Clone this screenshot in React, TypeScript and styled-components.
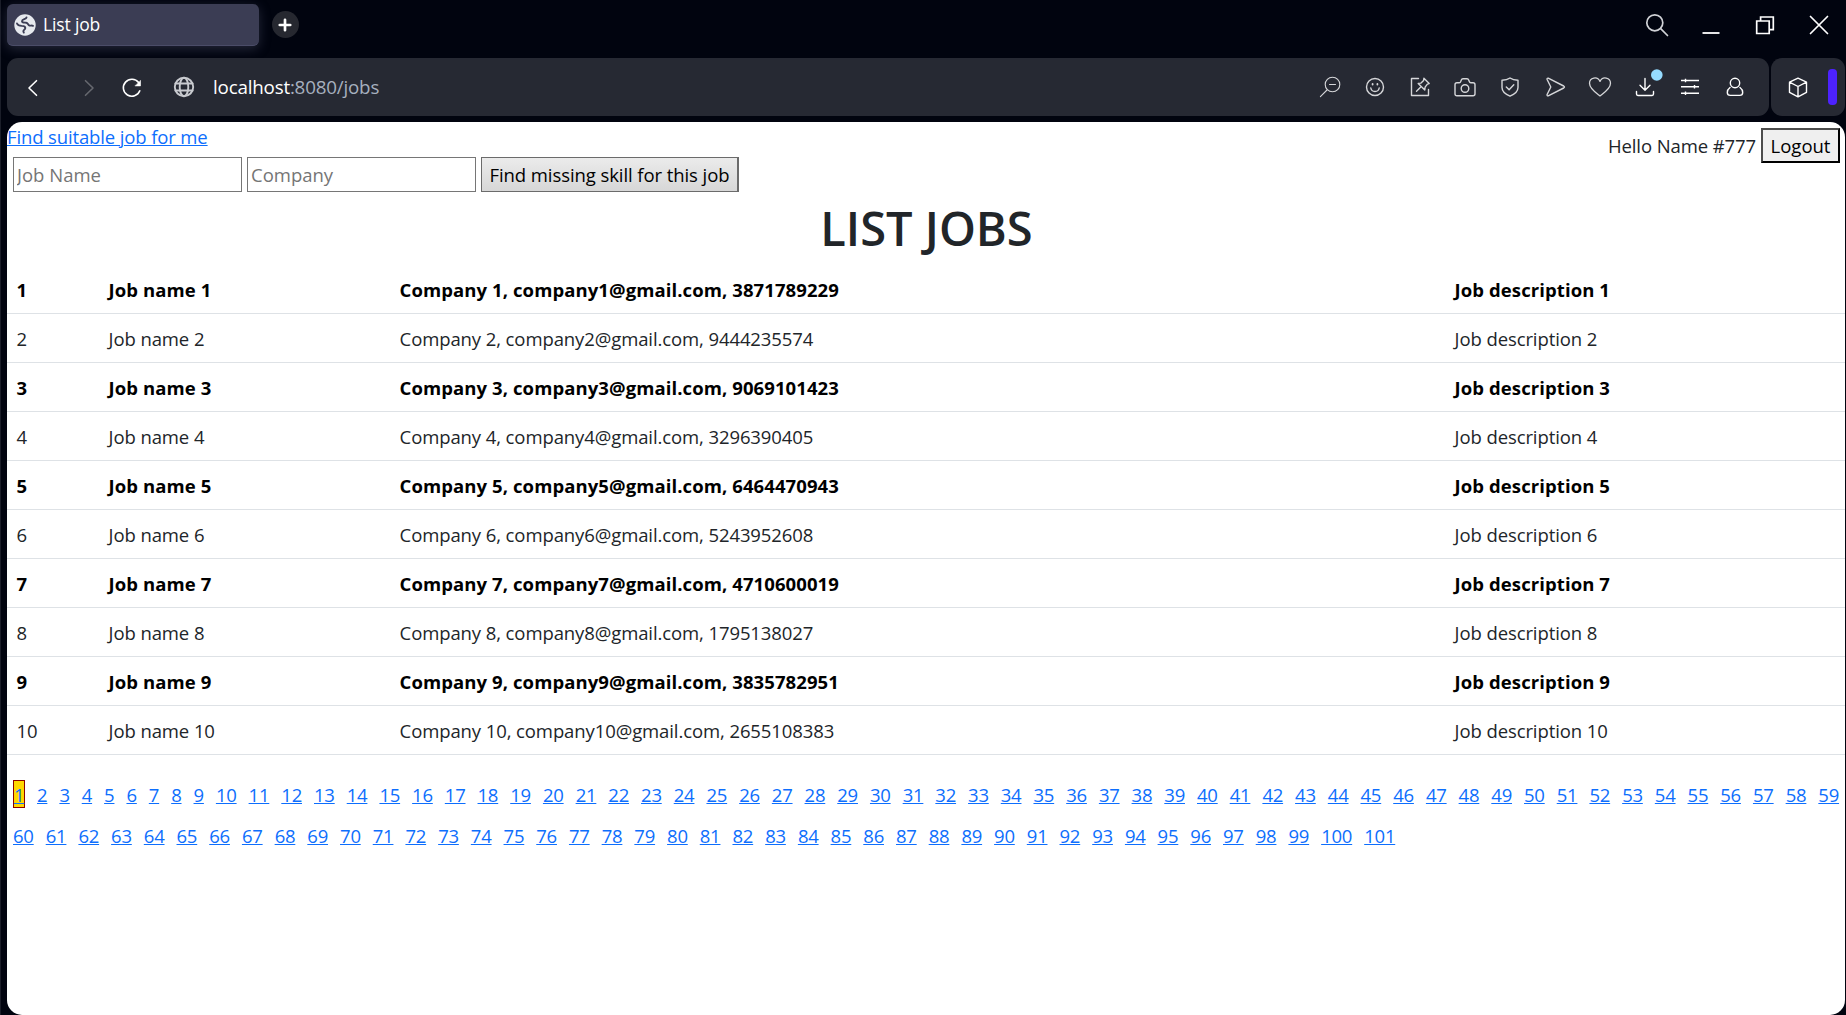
import React from "react";
import styled, { createGlobalStyle } from "styled-components";

const GlobalStyle = createGlobalStyle`
  *, *::before, *::after { box-sizing: border-box; }
  html, body { margin: 0; padding: 0; background: #01040f; overflow: hidden; }
  body, input, button {
    font-family: "Open Sans", "Noto Sans", sans-serif;
    font-size: 18.5px;
    font-weight: 400;
    line-height: 28.8px;
  }
`;

const Window = styled.div`
  width: 100vw;
  height: 100vh;
  display: flex;
  flex-direction: column;
  background: #01040f;
  border-left: 1px solid #1b1e29;
  padding: 0 1px 0 6px;
`;

const TabStrip = styled.header`
  height: 58px;
  display: flex;
  align-items: flex-start;
  padding-top: 4px;
`;

const Tab = styled.div`
  width: 252px;
  height: 42px;
  display: flex;
  align-items: center;
  gap: 7px;
  padding-left: 7px;
  border-radius: 6px;
  background: #3b3d54;
  border-bottom: 1px solid #4b4d68;
  box-shadow: 0 3px 12px rgba(90, 92, 120, 0.4);
`;

const TabTitle = styled.span`
  color: #fff;
  font-size: 17.5px;
  letter-spacing: -0.15px;
`;

const NewTab = styled.button`
  width: 27px;
  height: 27px;
  margin: 7px 0 0 12.5px;
  padding: 0;
  border: 0;
  border-radius: 50%;
  background: #262830;
  display: flex;
  align-items: center;
  justify-content: center;
`;

const WindowControls = styled.div`
  margin-left: auto;
  padding: 9px 14px 0 0;
  display: flex;
  gap: 30px;
`;

const Bars = styled.div`
  height: 58px;
  flex: none;
  display: flex;
  gap: 2px;
`;

const Bar = styled.div<{ $grow?: boolean }>`
  flex: ${(p) => (p.$grow ? "1" : "0 0 74px")};
  display: flex;
  align-items: center;
  background: #262933;
  border-radius: 11px;
  padding: ${(p) => (p.$grow ? "0 22px 0 14px" : "0 8px 0 15px")};
  justify-content: ${(p) => (p.$grow ? "flex-start" : "space-between")};
`;

const NavIcons = styled.div`
  display: flex;
  gap: 25px;
`;

const Address = styled.div`
  display: flex;
  align-items: center;
  gap: 17px;
  margin-left: 29px;
`;

const Url = styled.div`
  color: #a6b0bf;
  font-size: 18.8px;
  letter-spacing: -0.2px;
`;

const Host = styled.span`
  color: #fff;
`;

const Tools = styled.div`
  margin-left: auto;
  display: flex;
  gap: 21px;
`;

const Purple = styled.span`
  width: 9px;
  height: 36px;
  border-radius: 4px;
  background: #4d22ff;
`;

const Page = styled.main`
  position: relative;
  margin-top: 6px;
  flex: 1;
  background: #fff;
  color: #212529;
  border-radius: 15px;
  overflow: hidden;
`;

const Link = styled.a`
  color: #0d6efd;
  text-decoration: underline;
  text-decoration-thickness: 1px;
  text-underline-offset: 1px;
`;

const TopLink = styled(Link)`
  display: block;
  width: max-content;
  padding-top: 1px;
  letter-spacing: -0.13px;
`;

const Account = styled.div`
  position: absolute;
  top: 6px;
  right: 5px;
  display: flex;
  align-items: center;
  gap: 5px;
`;

const Greeting = styled.span`
  padding-top: 2px;
  letter-spacing: -0.1px;
`;

const Logout = styled.button`
  width: 79px;
  height: 35px;
  padding: 0;
  background: #efefef;
  border: 2px outset #000;
  border-color: #4c4c4c #000 #000 #4c4c4c;
  color: #000;
  line-height: 28px;
`;

const SearchForm = styled.form`
  display: flex;
  gap: 5px;
  padding: 5px 6px 0;
`;

const Field = styled.input`
  width: 229px;
  height: 35px;
  border: 1px solid #767676;
  border-radius: 0;
  padding: 1px 3px;
  &::placeholder { color: #757575; }
`;

const Submit = styled.button`
  width: 258px;
  height: 35px;
  padding: 2px 0 0;
  border: 1px solid #6b6b6b;
  border-right-width: 2px;
  background: linear-gradient(#ebebeb, #d7d7d7);
  color: #000;
  white-space: nowrap;
  letter-spacing: -0.08px;
`;

const Title = styled.h1`
  margin: 7px 0 8px;
  padding-left: 1px;
  height: 58px;
  line-height: 58px;
  font-size: 47px;
  font-weight: 600;
  text-align: center;
  letter-spacing: 0;
`;

const Table = styled.table`
  width: 100%;
  table-layout: fixed;
  border-collapse: collapse;
`;

const Row = styled.tr<{ $strong: boolean }>`
  height: 49px;
  color: ${(p) => (p.$strong ? "#000" : "#212529")};
  font-weight: ${(p) => (p.$strong ? 700 : 400)};
  letter-spacing: ${(p) => (p.$strong ? "0.09px" : "-0.1px")};
`;

const Cell = styled.td`
  padding: 11px 9.6px 8px;
  border-bottom: 1px solid #dee2e6;
  white-space: nowrap;
`;

const Pages = styled.nav`
  display: flex;
  flex-wrap: wrap;
  column-gap: 12.02px;
  row-gap: 13px;
  padding: 25px 0 0 6px;
`;

const PageLink = styled(Link)<{ $digits: number; $active: boolean }>`
  width: ${(p) => (p.$active ? 12 : p.$digits * 10.35)}px;
  height: 28px;
  line-height: ${(p) => (p.$active ? 28 : 30)}px;
  letter-spacing: -0.23px;
  text-align: center;
  ${(p) => p.$active && "background: gold; border: 1px solid #8b0000;"}
`;

type IconProps = { children: React.ReactNode; color?: string; size?: number; weight?: number };
const Icon = ({ children, color = "#d5d6d9", size = 24, weight = 1.25 }: IconProps) => (
  <svg width={size} height={size} viewBox="0 0 24 24" fill="none" stroke={color}
    strokeWidth={weight} strokeLinecap="round" strokeLinejoin="round" overflow="visible">
    {children}
  </svg>
);

const phones = [
  "3871789229", "9444235574", "9069101423", "3296390405", "6464470943",
  "5243952608", "4710600019", "1795138027", "3835782951", "2655108383",
];
const pageNumbers = Array.from({ length: 101 }, (_, i) => i + 1);

export default function App() {
  return (
    <>
      <GlobalStyle />
      <Window>
        <TabStrip>
          <Tab>
            <svg width="22" height="22" viewBox="0 0 22 22">
              <circle cx="11" cy="11" r="10.7" fill="#e6e9ee" />
              <g fill="none" stroke="#3b3d54" strokeWidth="1.9" strokeLinecap="round" strokeLinejoin="round">
                <path d="M3 9.500c.8 2 2.600 2.300 4.700 2.400 2.500 0 3.600.8 3.600 2.100 0 1.200-1.300 1.600-1.800 2.600-.3.700 0 1.500.3 2" />
                <path d="M12.500 3.500c-.3 1.900-4.500 1.500-4.500 3.700 0 1.700 2.300 1.300 4.200 1.500 1.700.2 1.600 2.200 3.200 2.800 1.200.4 2.300-.3 3.600.3" />
              </g>
            </svg>
            <TabTitle>List job</TabTitle>
          </Tab>
          <NewTab aria-label="New tab">
            <Icon size={14} color="#fff" weight={4.6}><path d="M12 3v18M3 12h18" /></Icon>
          </NewTab>
          <WindowControls>
            <Icon color="#d0d2d6" weight={1.7}><circle cx="9.8" cy="9.8" r="8" /><path d="m15.700 15.700 6.800 6.800" /></Icon>
            <Icon color="#fff" weight={1.8}><path d="M3.500 20h17" strokeLinecap="butt" /></Icon>
            <Icon color="#fff" weight={1.7}><path d="M3.700 8h12.500v12.500H3.700zM7.600 8V4h12.700v12.600h-4" strokeLinejoin="miter" /></Icon>
            <Icon color="#fff" weight={1.7}><path d="m3.500 3.500 17 17m0-17-17 17" /></Icon>
          </WindowControls>
        </TabStrip>

        <Bars>
          <Bar $grow>
            <NavIcons>
              <Icon color="#fff" weight={1.6}><path d="m15.500 5.700-7.500 7.300 7.500 7.300" /></Icon>
              <Icon color="#66686f" weight={1.6}><path d="m15.500 5.700 7.500 7.300-7.500 7.300" /></Icon>
              <Icon color="#fff" weight={1.6}><path d="M20.800 15.800a8.500 8.500 0 1 1-1.200-8.200" /><path d="M21.500 5.700v5.200h-5.200z" fill="#fff" strokeWidth=".6" /></Icon>
            </NavIcons>
            <Address>
              <Icon color="#c8cacf" weight={1.9}>
                <circle cx="12" cy="12" r="9.2" /><ellipse cx="12" cy="12" rx="4.3" ry="9.2" /><path d="M3.500 8.500h17m-17 7h17" />
              </Icon>
              <Url><Host>localhost</Host>:8080/jobs</Url>
            </Address>
            <Tools>
              <Icon weight={1.1}><circle cx="14.5" cy="9.5" r="7.3" /><path d="m9 15-6.600 6.600M11.500 9.500h6" /></Icon>
              <Icon weight={1.4}><circle cx="12" cy="12" r="8.5" /><path d="M7.800 13c.8 4.600 7.600 4.600 8.400 0" /><path d="M9.600 9v.5M14.400 9v.5" strokeWidth="1.8" /></Icon>
              <Icon weight={1.4}><path d="M10.500 3.500h-7v17h17v-6" /><path d="m15.900 3.300 5.300 5.300-1.800.5-2.300 3.100-.3 2.800-6.600-6.600 2.800-.3 2.600-2.600zM13 11.700 8.500 16.200" /></Icon>
              <Icon weight={1.4}><path d="M2 18.800V9.700Q2 7.800 4 7.800h2.200q1.100 0 1.500-1.200l.5-1.400Q8.700 3.800 10 3.800h4q1.300 0 1.800 1.400l.5 1.400q.4 1.200 1.500 1.200H20q2 0 2 1.900v9.100q0 1.900-2 1.900H4q-2 0-2-1.900z" /><circle cx="12" cy="13.5" r="3.8" /></Icon>
              <Icon weight={1.4}><path d="M12 3c2.400 1.800 5 2.300 8 2.300v7.300c0 4.200-3.400 6.700-8 8.600-4.600-1.900-8-4.400-8-8.600V5.300c3 0 5.600-.5 8-2.300z" /><path d="m8.300 12 2.800 2.800 4.700-5" /></Icon>
              <Icon weight={1.4}><path d="M5.200 3.200 20.700 11q1.500 1 0 2L5.200 20.800Q3.800 21 4.100 19.500L7.800 12 4.100 4.500Q3.800 3 5.200 3.200z" /></Icon>
              <Icon weight={1.3}><path d="M12 21C9.500 19 1.500 14 1.500 8.300 1.500 2.600 9.400.7 12 6.400c2.600-5.700 10.500-3.800 10.500 1.900C22.500 14 14.500 19 12 21z" /></Icon>
              <Icon color="#fff" weight={1.4}><path d="M12 3.500v11.800m-5-5 5 5 5-5M3.500 16.500v2.600q0 1.400 1.400 1.400h14.200q1.400 0 1.400-1.400v-2.600" /><circle cx="23.8" cy="0" r="5.8" fill="#95dbff" stroke="none" /></Icon>
              <Icon color="#fff" weight={1.4}><path d="M3 5.500h18M3 11.800h18M3 18.300h18M7.500 3.700v3.600M16.500 10v3.600M7.500 16.500v3.600" strokeLinecap="butt" /></Icon>
              <Icon color="#fff" weight={1.4}><circle cx="12" cy="8" r="4.7" /><path d="M7 12.500c-2 1.500-2.700 3.300-2.700 5 0 2 1.200 2.900 3 2.900h9.400c1.800 0 3-.9 3-2.900 0-1.700-.7-3.500-2.700-5" /></Icon>
            </Tools>
          </Bar>
          <Bar>
            <Icon color="#fff" weight={1.4}><path d="m12 3.200 8.500 4v10.200L12 21.800l-8.500-4.400V7.200zM3.500 7.200l8.500 4.300 8.500-4.300M12 11.500v10.300" /></Icon>
            <Purple />
          </Bar>
        </Bars>

        <Page>
          <TopLink>Find suitable job for me</TopLink>
          <Account>
            <Greeting>Hello Name #777</Greeting>
            <Logout>Logout</Logout>
          </Account>
          <SearchForm>
            <Field placeholder="Job Name" />
            <Field placeholder="Company" />
            <Submit type="button">Find missing skill for this job</Submit>
          </SearchForm>
          <Title>LIST JOBS</Title>
          <Table>
            <colgroup>
              <col width="92" /><col width="291" /><col width="1055" /><col />
            </colgroup>
            <tbody>
              {phones.map((phone, i) => (
                <Row key={phone} $strong={i % 2 === 0}>
                  <Cell>{i + 1}</Cell>
                  <Cell>Job name {i + 1}</Cell>
                  <Cell>{`Company ${i + 1}, company${i + 1}@gmail.com, ${phone}`}</Cell>
                  <Cell>Job description {i + 1}</Cell>
                </Row>
              ))}
            </tbody>
          </Table>
          <Pages>
            {pageNumbers.map((n) => (
              <PageLink key={n} $digits={String(n).length} $active={n === 1}>{n}</PageLink>
            ))}
          </Pages>
        </Page>
      </Window>
    </>
  );
}
